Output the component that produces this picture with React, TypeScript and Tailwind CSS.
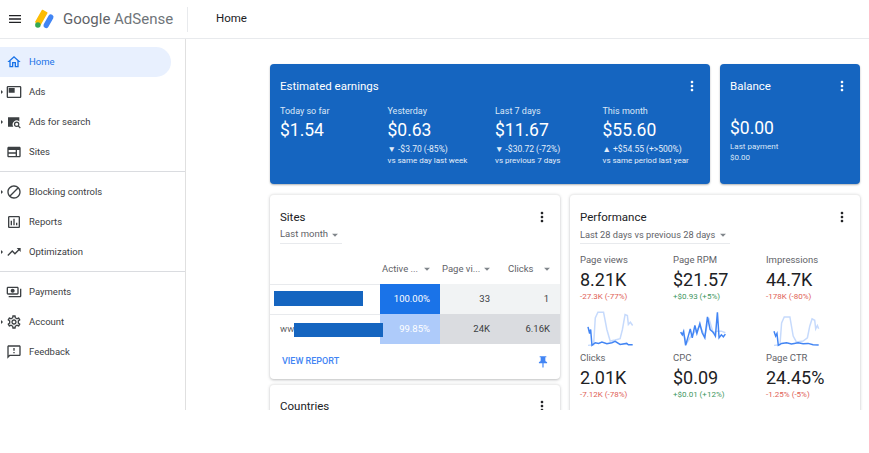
import React from 'react';
import {
  MdMenu,
  MdMoreVert,
  MdPushPin,
  MdArrowDropDown,
  MdOutlineHome,
  MdOutlineFeaturedVideo,
  MdOutlineWeb,
  MdOutlineBlock,
  MdOutlineAssessment,
  MdTrendingUp,
  MdOutlinePayments,
  MdOutlineSettings,
  MdOutlineFeedback,
} from 'react-icons/md';

const SearchAdsIcon = (props: React.SVGProps<SVGSVGElement>) => (
  <svg viewBox="0 0 24 24" fill="currentColor" {...props}>
    <path d="M3 5h17v6.2a6 6 0 0 0-9 7.8H3z" />
    <circle cx="16" cy="15.5" r="3.2" fill="none" stroke="currentColor" strokeWidth="1.8" />
    <path d="M18.3 17.8l3.2 3.2" stroke="currentColor" strokeWidth="1.8" />
  </svg>
);

const AdsenseLogo = () => (
  <svg viewBox="0 0 24 24" className="w-[22px] h-[22px] shrink-0">
    <path d="M9.2 2.6 1.9 15.3l4.8 2.8L14 5.4z" fill="#fbbc04" stroke="#fbbc04" strokeWidth="1.5" strokeLinejoin="round" />
    <path d="M16 8.3 10.6 17.7a2.9 2.9 0 0 0 5 2.9L21 11.2a2.9 2.9 0 0 0-5-2.9z" fill="#4285f4" />
    <circle cx="4.2" cy="18.6" r="3" fill="#34a853" />
  </svg>
);

const navGroups = [
  [
    { label: 'Home', icon: MdOutlineHome, active: true },
    { label: 'Ads', icon: MdOutlineFeaturedVideo, caret: true },
    { label: 'Ads for search', icon: SearchAdsIcon, caret: true },
    { label: 'Sites', icon: MdOutlineWeb },
  ],
  [
    { label: 'Blocking controls', icon: MdOutlineBlock, caret: true },
    { label: 'Reports', icon: MdOutlineAssessment },
    { label: 'Optimization', icon: MdTrendingUp, caret: true },
  ],
  [
    { label: 'Payments', icon: MdOutlinePayments },
    { label: 'Account', icon: MdOutlineSettings, caret: true },
    { label: 'Feedback', icon: MdOutlineFeedback },
  ],
];

const earnings = [
  { label: 'Today so far', value: '$1.54' },
  { label: 'Yesterday', value: '$0.63', delta: '▼ -$3.70 (-85%)', note: 'vs same day last week' },
  { label: 'Last 7 days', value: '$11.67', delta: '▼ -$30.72 (-72%)', note: 'vs previous 7 days' },
  { label: 'This month', value: '$55.60', delta: '▲ +$54.55 (+>500%)', note: 'vs same period last year' },
];

const topMetrics = [
  { label: 'Page views', value: '8.21K', delta: '-27.3K (-77%)', up: false },
  { label: 'Page RPM', value: '$21.57', delta: '+$0.93 (+5%)', up: true },
  { label: 'Impressions', value: '44.7K', delta: '-178K (-80%)', up: false },
];

const bottomMetrics = [
  { label: 'Clicks', value: '2.01K', delta: '-7.12K (-78%)', up: false },
  { label: 'CPC', value: '$0.09', delta: '+$0.01 (+12%)', up: true },
  { label: 'Page CTR', value: '24.45%', delta: '-1.25% (-5%)', up: false },
];

const sparks = [
  {
    box: '65 362 142 110',
    light: '68,468 85,466 90,385 98,368 115,368 125,420 135,455 150,452 165,448 172,420 180,375 187,378 190,405 196,398 203,408',
    dark: '68,412 73,432 76,420 80,468 90,460 100,462 110,458 125,463 140,460 150,456 165,465 185,462 190,466 203,466',
  },
  {
    box: '345 362 142 110',
    light: '347,428 358,440 365,462 378,440 392,425 405,410 420,440 432,385 445,430 458,425 470,425 482,430',
    dark: '347,428 352,436 356,426 362,468 370,440 376,418 382,445 390,408 396,432 405,402 412,430 420,445 428,382 436,420 445,428 452,440 458,368 463,445 470,436 476,442 482,434',
  },
  {
    box: '624 362 142 110',
    light: '627,468 645,466 650,400 658,382 675,382 685,440 695,458 715,455 728,445 735,410 742,388 750,392 753,418 758,408 762,418',
    dark: '627,425 632,440 636,432 640,468 650,462 665,460 680,464 700,460 715,463 730,462 745,466 762,467',
  },
];

const Metric = ({ m }: { m: { label: string; value: string; delta: string; up: boolean } }) => (
  <div className="w-[93px] shrink-0">
    <div className="text-[9.5px] leading-[14px] text-[#5f6368]">{m.label}</div>
    <div className="text-[18px] leading-[24px] text-[#202124] mt-[1px]">{m.value}</div>
    <div className={`text-[8px] leading-[12px] -mt-[1px] ${m.up ? 'text-[#3d9660]' : 'text-[#e06055]'}`}>{m.delta}</div>
  </div>
);

const Caret = () => <MdArrowDropDown className="w-[14px] h-[14px] text-[#80868b] shrink-0" />;

const HeaderCell = ({ label, left = 2 }: { label: string; left?: number }) => (
  <div
    className={`flex items-center justify-between pr-[6px] text-[9.5px] text-[#5f6368] whitespace-nowrap ${
      left === 2 ? 'pl-[2px]' : 'pl-[8px]'
    }`}
  >
    <span>{label}</span>
    <Caret />
  </div>
);

export default function App() {
  return (
    <div className="w-[869px] h-[453px] bg-white overflow-hidden font-['Roboto',sans-serif] text-[#3c4043]">
      {/* top bar */}
      <header className="h-[39px] flex items-center border-b border-[#e8eaed]">
        <MdMenu className="w-[16px] h-[16px] ml-[7px] text-[#202124]" />
        <div className="ml-[11px]">
          <AdsenseLogo />
        </div>
        <div className="ml-[7px] text-[15px] text-[#5f6368] w-[124px] whitespace-nowrap">
          Google <span className="text-[#70757a]">AdSense</span>
        </div>
        <div className="w-px h-[25px] bg-[#e8eaed]" />
        <div className="ml-[28px] text-[11.5px] text-[#202124]">Home</div>
      </header>

      <div className="h-[371px] flex overflow-hidden">
        {/* sidebar */}
        <nav className="w-[186px] shrink-0 border-r border-[#e0e0e0] pt-[8px] text-[9.5px]">
          {navGroups.map((group, i) => (
            <div key={i} className={i > 0 ? 'border-t border-[#dadce0] mt-[4px] pt-[5px]' : ''}>
              {group.map((item) => {
                const Icon = item.icon;
                return (
                  <div
                    key={item.label}
                    className={`relative h-[30px] w-[171px] flex items-center rounded-r-full ${
                      item.active ? 'bg-[#e8f0fe] text-[#1a73e8]' : 'text-[#3c4043]'
                    }`}
                  >
                    {item.caret && (
                      <span className="absolute left-[1px] top-[13px] border-y-[2px] border-l-[2px] border-y-transparent border-l-[#3c4043]" />
                    )}
                    <Icon className={`w-[16px] h-[16px] ml-[6px] ${item.active ? 'text-[#1a73e8]' : 'text-[#3c4043]'}`} />
                    <span className="ml-[7px]">{item.label}</span>
                  </div>
                );
              })}
            </div>
          ))}
        </nav>

        {/* dashboard */}
        <main className="flex-1 pl-[84px] pt-[25px] pr-[9px] overflow-hidden">
          <div className="flex gap-[10px]">
            <section className="w-[440px] h-[120px] rounded-[4px] bg-[#1565c0] text-white px-[10px] pt-[14px] shadow-[0_1px_2px_rgba(60,64,67,0.4)]">
              <div className="flex items-center justify-between">
                <h2 className="text-[11.5px] leading-[16px]">Estimated earnings</h2>
                <MdMoreVert className="w-[16px] h-[16px]" />
              </div>
              <div className="flex mt-[10px]">
                {earnings.map((e) => (
                  <div key={e.label} className="w-[107.5px] shrink-0">
                    <div className="text-[9px] leading-[14px] text-[#dbe7f7] whitespace-nowrap">{e.label}</div>
                    <div className="text-[17.5px] leading-[24px]">{e.value}</div>
                    {e.delta && (
                      <div className="text-[8px] leading-[11px] mt-[2px] text-[#e3edf9] whitespace-nowrap">
                        <div className="text-[8.5px]">{e.delta}</div>
                        <div>{e.note}</div>
                      </div>
                    )}
                  </div>
                ))}
              </div>
            </section>

            <section className="w-[140px] h-[120px] rounded-[4px] bg-[#1565c0] text-white px-[10px] pt-[14px] shadow-[0_1px_2px_rgba(60,64,67,0.4)]">
              <div className="flex items-center justify-between">
                <h2 className="text-[11.5px] leading-[16px]">Balance</h2>
                <MdMoreVert className="w-[16px] h-[16px]" />
              </div>
              <div className="text-[17.5px] leading-[24px] mt-[22px]">$0.00</div>
              <div className="text-[8px] leading-[11px] mt-[1px] text-[#dbe7f7]">
                <div>Last payment</div>
                <div>$0.00</div>
              </div>
            </section>
          </div>

          <div className="flex gap-[10px] mt-[10px] items-start">
            <div className="w-[290px] shrink-0 flex flex-col gap-[5px]">
              <section className="h-[185px] rounded-[4px] bg-white border-t border-[#eeeeee] shadow-[0_1px_3px_rgba(60,64,67,0.35)]">
                <div className="flex items-center justify-between px-[10px] pt-[14px]">
                  <h2 className="text-[11.5px] leading-[16px] text-[#202124]">Sites</h2>
                  <MdMoreVert className="w-[16px] h-[16px] text-[#202124]" />
                </div>
                <div className="ml-[10px] mt-[1px] w-[62px] h-[18px] flex items-center justify-between border-b border-[#e8eaed] text-[9.5px] text-[#5f6368]">
                  <span className="whitespace-nowrap">Last month</span>
                  <Caret />
                </div>
                <div className="grid grid-cols-[110px_60px_60px_60px] mt-[10px]">
                  <div className="h-[30px]" />
                  <HeaderCell label="Active ..." />
                  <HeaderCell label="Page vi..." />
                  <HeaderCell label="Clicks" left={8} />

                  <div className="h-[30px] flex items-center pl-[4px] border-t border-[#e8eaed]">
                    <div className="w-[89px] h-[15px] mb-[3px] bg-[#1565c0]" />
                  </div>
                  <div className="h-[30px] bg-[#1a73e8] text-white text-[9.5px] flex items-center justify-end pr-[10px]">100.00%</div>
                  <div className="h-[30px] bg-[#f1f3f4] text-[9.5px] flex items-center justify-end pr-[10px]">33</div>
                  <div className="h-[30px] bg-[#f1f3f4] text-[9.5px] flex items-center justify-end pr-[11px]">1</div>

                  <div className="h-[30px] flex items-center pl-[10px] border-t border-[#e8eaed] text-[9.5px] text-[#5f6368]">
                    ww
                    <div className="w-[89px] h-[14px] bg-[#1565c0] shrink-0 relative z-10" />
                  </div>
                  <div className="h-[30px] bg-[#aecbfa] text-white text-[9.5px] flex items-center justify-end pr-[10px]">99.85%</div>
                  <div className="h-[30px] bg-[#dadce0] text-[9.5px] flex items-center justify-end pr-[10px]">24K</div>
                  <div className="h-[30px] bg-[#dadce0] text-[9.5px] flex items-center justify-end pr-[10px]">6.16K</div>
                </div>
                <div className="flex items-center justify-between pl-[12px] pr-[10px] h-[36px]">
                  <span className="text-[9px] font-medium text-[#4285f4]">VIEW REPORT</span>
                  <MdPushPin className="w-[14px] h-[14px] text-[#4285f4]" />
                </div>
              </section>

              <section className="h-[60px] rounded-[4px] bg-white border-t border-[#eeeeee] shadow-[0_1px_3px_rgba(60,64,67,0.35)]">
                <div className="flex items-center justify-between px-[10px] pt-[13px]">
                  <h2 className="text-[11.5px] leading-[16px] text-[#202124]">Countries</h2>
                  <MdMoreVert className="w-[16px] h-[16px] text-[#202124]" />
                </div>
              </section>
            </div>

            <section className="w-[290px] h-[260px] shrink-0 rounded-[4px] bg-white border-t border-[#eeeeee] shadow-[0_1px_3px_rgba(60,64,67,0.35)]">
              <div className="flex items-center justify-between px-[10px] pt-[14px]">
                <h2 className="text-[11.5px] leading-[16px] text-[#202124]">Performance</h2>
                <MdMoreVert className="w-[16px] h-[16px] text-[#202124]" />
              </div>
              <div className="ml-[10px] mt-[1px] w-[150px] h-[18px] flex items-center justify-between border-b border-[#e8eaed] text-[9.25px] text-[#5f6368]">
                <span className="whitespace-nowrap">Last 28 days vs previous 28 days</span>
                <Caret />
              </div>
              <div className="flex pl-[10px] mt-[9px]">
                {topMetrics.map((m) => (
                  <Metric key={m.label} m={m} />
                ))}
              </div>
              <div className="flex pl-[10px] mt-[7px] h-[38px]">
                {sparks.map((s) => (
                  <div key={s.box} className="w-[93px] shrink-0">
                    <svg viewBox={s.box} className="w-[47px] h-[37px] ml-[7px]" fill="none">
                      <polyline points={s.light} stroke="#c6dafc" strokeWidth="4.5" />
                      <polyline points={s.dark} stroke="#4285f4" strokeWidth="4.5" />
                    </svg>
                  </div>
                ))}
              </div>
              <div className="flex pl-[10px] mt-[3px]">
                {bottomMetrics.map((m) => (
                  <Metric key={m.label} m={m} />
                ))}
              </div>
            </section>
          </div>
        </main>
      </div>
    </div>
  );
}
